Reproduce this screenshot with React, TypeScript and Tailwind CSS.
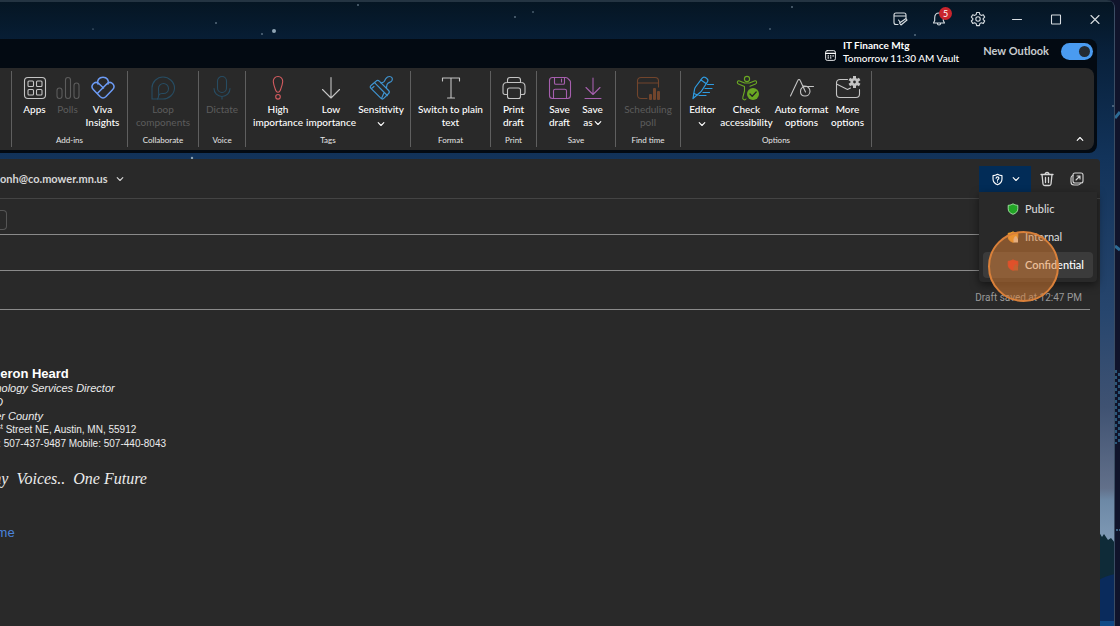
import React, { useState } from 'react';

interface IconProps {
  className?: string;
  children: React.ReactNode;
}

function Icon({ className = '', children }: IconProps) {
  return (
    <svg
      className={`h-7 w-7 shrink-0 ${className}`}
      viewBox="0 0 28 28"
      fill="none"
      stroke="currentColor"
      strokeWidth="1.1"
      strokeLinecap="round"
      strokeLinejoin="round"
      aria-hidden="true"
    >
      {children}
    </svg>
  );
}

function SmallIcon({ className = '', children }: IconProps) {
  return (
    <svg
      className={`h-4 w-4 shrink-0 ${className}`}
      viewBox="0 0 16 16"
      fill="none"
      stroke="currentColor"
      strokeWidth="1.1"
      strokeLinecap="round"
      strokeLinejoin="round"
      aria-hidden="true"
    >
      {children}
    </svg>
  );
}

function Chevron({ className = '' }: { className?: string }) {
  return (
    <svg className={`h-2 w-2 shrink-0 ${className}`} viewBox="0 0 8 8" fill="none" stroke="currentColor" strokeWidth="1.1" strokeLinecap="round" strokeLinejoin="round" aria-hidden="true">
      <path d="M1.2 2.7 4 5.5 6.8 2.7" />
    </svg>
  );
}

const icons = {
  apps: (
    <Icon className="text-[#c4c4c4]">
      <rect x="3.5" y="3.5" width="21" height="21" rx="3.5" />
      <rect x="7" y="7" width="5.5" height="5.5" rx="1" />
      <rect x="15.5" y="7" width="5.5" height="5.5" rx="1" />
      <rect x="7" y="15.5" width="5.5" height="5.5" rx="1" />
      <rect x="15.5" y="15.5" width="5.5" height="5.5" rx="1" />
    </Icon>
  ),
  polls: (
    <Icon className="text-[#5c5c5c]">
      <rect x="3" y="14" width="5" height="10.5" rx="2.5" />
      <rect x="11.5" y="3.5" width="5" height="21" rx="2.5" />
      <rect x="20" y="9" width="5" height="15.5" rx="2.5" />
    </Icon>
  ),
  viva: (
    <Icon className="text-[#6c9bf5]">
      <g strokeWidth="1.5">
        <path d="M9 10C7.700 6.500 10 3.200 14 3.200s6.300 3.300 5 6.800" />
        <path d="m14.500 14-4.200-4c-2-1.900-4.300-2-6-.300-1.800 1.900-1.600 4.200.200 6l6.500 6.800c2 2 4 2 6 0l6.500-6.800c1.800-1.800 2-4.100.2-6-1.700-1.700-4-1.600-6 .300l-8.700 8.700" />
      </g>
    </Icon>
  ),
  loop: (
    <Icon className="text-[#274c62]">
      <path d="M3 25V14C3 8 8 3 14 3s11.500 5 11.500 11S20 25 14 25H3Z" />
      <path d="M8.500 25c2-2 1-6.500 1-10.500C9.500 11.500 12 9.500 14.500 9.500s5 2 5 5-2.200 5-5 5c-2 0-3.500-.500-4.500 1.500" />
    </Icon>
  ),
  dictate: (
    <Icon className="text-[#274c62]">
      <rect x="9.500" y="2.500" width="9" height="16" rx="4.500" />
      <path d="M6 14.500c0 4.500 3.500 8 8 8s8-3.500 8-8M14 22.500V25" />
    </Icon>
  ),
  high: (
    <Icon className="text-[#d15b5f]">
      <path d="M14 2.500c-3 0-5 2.300-4.700 5.300.300 3.500 1.700 6.500 2.500 8.700.800 2.300 3.600 2.300 4.400 0 .800-2.200 2.200-5.200 2.500-8.700.300-3-1.700-5.300-4.700-5.300Z" />
      <circle cx="14" cy="22.800" r="2.300" />
    </Icon>
  ),
  low: (
    <Icon className="text-[#c4c4c4]">
      <path d="M14 3.500V24M5.500 15.500 14 24l8.500-8.500" />
    </Icon>
  ),
  sensitivity: (
    <Icon className="text-[#3f93cf]">
      <g strokeWidth="1.200">
        <path d="m4 11.500 5-4.300c1-1 2.300-1 3.300 0l9.300 9.300c1 1 1 2 0 3L17 24.200c-1 1-2.200 1-3.200 0L4 14.400c-1-1-1-2 0-2.900Z" />
        <path d="m7.500 8.700 12.800 12.800M4.500 14.500l2.500-2M14.500 24.500l2.500-5.700" />
        <path d="m14 9 2.200-.700c1.500-.500 1.600-2.300 2.600-3.600 1-1.400 2-2.200 3.700-2.200 2.300 0 3.500 2 2.500 4-.900 1.700-2.500 1.700-4 2.700-1.700 1.200-1 2.800-1.500 4.300" />
      </g>
    </Icon>
  ),
  text: (
    <Icon className="text-[#c4c4c4]">
      <path d="M5.500 7V4h17v3M14 4v20M10.500 24h7" />
    </Icon>
  ),
  print: (
    <Icon className="text-[#c4c4c4]">
      <path d="M7.500 8V6c0-1.500 1-2.500 2.500-2.500h8c1.500 0 2.500 1 2.500 2.500v2M7.500 20.500H5c-1.300 0-2-.800-2-2v-6C3 10 4.500 8.500 7 8.500h14c2.500 0 4 1.500 4 4v6c0 1.200-.700 2-2 2h-2.500" />
      <rect x="7.500" y="14" width="13" height="10.500" rx="2" />
    </Icon>
  ),
  save: (
    <Icon className="text-[#a65fae]">
      <path d="M3.500 6.500c0-2 1-3 3-3h13.300c.700 0 1.200.200 1.700.700l2.300 2.300c.500.500.700 1 .700 1.700v13.300c0 2-1 3-3 3h-15c-2 0-3-1-3-3v-15Z" />
      <path d="M8.500 3.500V9c0 .800.500 1.300 1.300 1.300h7.400c.800 0 1.300-.500 1.300-1.300V3.500M7.500 24.500V17c0-1 .600-1.700 1.700-1.700h9.600c1.100 0 1.700.700 1.700 1.700v7.500M15.500 5v3" />
    </Icon>
  ),
  saveAs: (
    <Icon className="text-[#a65fae]">
      <path d="M14 4v16M7 13.500l7 7 7-7M6 24.500h16" />
    </Icon>
  ),
  scheduling: (
    <Icon className="text-[#72452c]">
      <path d="M13 24.500H7c-2 0-3.500-1.500-3.500-3.500V7C3.500 5 5 3.500 7 3.500h14c2 0 3.500 1.500 3.500 3.500v6M3.500 9h21" />
      <g fill="currentColor" stroke="none">
        <rect x="15" y="20" width="3" height="6" rx="1" />
        <rect x="19" y="14" width="3" height="12" rx="1" />
        <rect x="23" y="17" width="3" height="9" rx="1" />
      </g>
    </Icon>
  ),
  editor: (
    <Icon className="text-[#2f9be0]">
      <g strokeWidth="1.200">
        <path d="m4 24.500 1.500-9c.200-1 .500-1.700 1-2.500L13 4.300c1-1.400 2.200-1.600 3.500-.700l1.300.900c1.300.9 1.500 2 .600 3.400L12.500 17c-.500.800-1 1.200-1.800 1.800L4 24.500Z" />
        <path d="m12 6 5 3.500M5 19.500l3.500 1.500M18.500 10.500h6M16 14.500h7M14 18.500h6.500M10 21.500h7" />
      </g>
    </Icon>
  ),
  accessibility: (
    <Icon className="text-[#6aa823]">
      <circle cx="14" cy="5" r="2.600" />
      <path d="M13 25c-.500.700-1.500 1-2.300.600-1-.400-1.200-1.200-.900-2.200L11.500 17v-4.500l-6-2.500c-1-.400-1.400-1.200-1-2.200.300-.900 1.200-1.200 2.100-.900l5 2.100h4.800l5-2.100c.900-.300 1.800 0 2.100.900.400 1 0 1.800-1 2.200l-5.500 2.300" />
      <circle cx="20" cy="20" r="6" fill="currentColor" stroke="none" />
      <path d="m17 20 2.200 2.200 4-4.200" stroke="#242424" strokeWidth="1.300" />
    </Icon>
  ),
  autoFormat: (
    <Icon className="text-[#c4c4c4]">
      <path d="m2.500 22 7.300-15.500c.600-1.400 1.800-1.400 2.400 0l5.300 11.500" />
      <path d="M25.500 12.500h-7c-4 0-6 2.200-6 5s2 4.500 4.500 4.500 5-1.800 5-4.800c0-3.200-2.500-5.700-7-5.200" />
    </Icon>
  ),
  more: (
    <Icon className="text-[#c4c4c4]">
      <path d="M13.500 5.500H6C4 5.500 2.500 7 2.500 9v11c0 2 1.500 3.500 3.500 3.500h16c2 0 3.500-1.500 3.500-3.500v-4.500M2.500 10l11 5.500 3-1.500" />
      <g strokeWidth="3" strokeLinecap="butt">
        <path d="M20.500 2v12M15.300 5l10.400 6M15.300 11l10.400-6" />
      </g>
      <circle cx="20.500" cy="8" r="4" fill="currentColor" stroke="none" />
      <circle cx="20.500" cy="8" r="1.400" fill="#292929" stroke="none" />
    </Icon>
  ),
};

interface Command {
  icon: React.ReactNode;
  label: string[];
  width: string;
  disabled?: boolean;
  menu?: 'below' | 'inline';
}

interface Group {
  name: string;
  width: string;
  commands: Command[];
}

const groups: Group[] = [
  {
    name: 'Add-ins',
    width: 'w-[116px]',
    commands: [
      { icon: icons.apps, label: ['Apps'], width: 'w-8' },
      { icon: icons.polls, label: ['Polls'], width: 'w-8', disabled: true },
      { icon: icons.viva, label: ['Viva', 'Insights'], width: 'w-9' },
    ],
  },
  {
    name: 'Collaborate',
    width: 'w-[71px]',
    commands: [{ icon: icons.loop, label: ['Loop', 'components'], width: 'w-16', disabled: true }],
  },
  {
    name: 'Voice',
    width: 'w-[47px]',
    commands: [{ icon: icons.dictate, label: ['Dictate'], width: 'w-10', disabled: true }],
  },
  {
    name: 'Tags',
    width: 'w-[165px]',
    commands: [
      { icon: icons.high, label: ['High', 'importance'], width: 'w-[52px]' },
      { icon: icons.low, label: ['Low', 'importance'], width: 'w-[52px]' },
      { icon: icons.sensitivity, label: ['Sensitivity'], width: 'w-[46px]', menu: 'below' },
    ],
  },
  {
    name: 'Format',
    width: 'w-[80px]',
    commands: [{ icon: icons.text, label: ['Switch to plain', 'text'], width: 'w-[72px]' }],
  },
  {
    name: 'Print',
    width: 'w-[46px]',
    commands: [{ icon: icons.print, label: ['Print', 'draft'], width: 'w-10' }],
  },
  {
    name: 'Save',
    width: 'w-[79px]',
    commands: [
      { icon: icons.save, label: ['Save', 'draft'], width: 'w-8' },
      { icon: icons.saveAs, label: ['Save', 'as'], width: 'w-8', menu: 'inline' },
    ],
  },
  {
    name: 'Find time',
    width: 'w-[65px]',
    commands: [{ icon: icons.scheduling, label: ['Scheduling', 'poll'], width: 'w-14', disabled: true }],
  },
  {
    name: 'Options',
    width: 'w-[191px]',
    commands: [
      { icon: icons.editor, label: ['Editor'], width: 'w-8', menu: 'below' },
      { icon: icons.accessibility, label: ['Check', 'accessibility'], width: 'w-[54px]' },
      { icon: icons.autoFormat, label: ['Auto format', 'options'], width: 'w-[54px]' },
      { icon: icons.more, label: ['More', 'options'], width: 'w-9' },
    ],
  },
];

function RibbonButton({ icon, label, width, disabled, menu }: Command) {
  return (
    <button
      type="button"
      disabled={disabled}
      className={`flex shrink-0 flex-col items-center whitespace-nowrap text-[10px] leading-[13px] ${width} ${
        disabled ? 'text-[#5c5c5c]' : 'font-medium text-white'
      }`}
    >
      {icon}
      <span className="mt-px flex flex-col items-center">
        {label.map((line, i) => (
          <span key={line} className="flex items-center gap-px">
            {line}
            {menu === 'inline' && i === label.length - 1 && <Chevron />}
          </span>
        ))}
        {menu === 'below' && <Chevron className="mt-1" />}
      </span>
    </button>
  );
}

function RibbonGroup({ name, width, commands }: Group) {
  return (
    <section className={`flex shrink-0 flex-col items-center justify-between border-r border-[#5f5f5f] ${width}`}>
      <div className="flex justify-center gap-px pt-[3px]">
        {commands.map((command) => (
          <RibbonButton key={command.label.join(' ')} {...command} />
        ))}
      </div>
      <h2 className="pb-0.5 text-[8px] leading-[10px] text-[#e6e6e6]">{name}</h2>
    </section>
  );
}

function TitleBar() {
  return (
    <header className="flex h-[39px] items-center justify-end gap-[7px] border-t-2 border-[#243442] pr-[3px] pb-1 text-[#d8dde1]">
      <button type="button" aria-label="My day" className="flex w-8 justify-center">
        <SmallIcon>
          <path d="M6 13.500H4c-1.200 0-2-.800-2-2V4c0-1.200.800-2 2-2h8c1.200 0 2 .800 2 2v3M2 5h12" />
          <path d="m7.500 12 1.500 2 6-5-1-1.500-6.500 4.500ZM6.500 9l1.500 2" />
        </SmallIcon>
      </button>
      <button type="button" aria-label="Notifications" className="relative flex w-8 justify-center">
        <SmallIcon>
          <path d="M8 2C5 2 3.700 4.500 3.700 7v2.500L2.500 12h11l-1.200-2.500V7C12.300 4.500 11 2 8 2ZM6.300 12.300c.200 2.300 3.200 2.300 3.400 0" />
        </SmallIcon>
        <span className="absolute -top-1 right-[3px] flex h-[13px] w-[13px] items-center justify-center rounded-full bg-[#c9252d] text-[9px] leading-none text-white">
          5
        </span>
      </button>
      <button type="button" aria-label="Settings" className="flex w-8 justify-center">
        <SmallIcon>
          <path d="M6.600 1.500h2.800l.400 2 1.500.900 2-.700 1.400 2.400L13.200 7.500v1.200l1.500 1.300-1.400 2.400-2-.700-1.500.900-.400 2H6.600l-.400-2-1.500-.900-2 .700L1.300 10l1.500-1.300V7.500L1.300 6.100l1.400-2.400 2 .700 1.500-.900.400-2Z" />
          <circle cx="8" cy="8" r="2.200" />
        </SmallIcon>
      </button>
      <button type="button" aria-label="Minimize" className="flex w-8 justify-center">
        <SmallIcon>
          <path d="M3.500 8.500h9" />
        </SmallIcon>
      </button>
      <button type="button" aria-label="Maximize" className="flex w-8 justify-center">
        <SmallIcon>
          <rect x="3.500" y="4" width="9" height="9" rx=".500" />
        </SmallIcon>
      </button>
      <button type="button" aria-label="Close" className="flex w-8 justify-center">
        <SmallIcon>
          <path d="m4 4.500 8 8M12 4.500l-8 8" />
        </SmallIcon>
      </button>
    </header>
  );
}

function ReminderBar() {
  return (
    <div className="flex h-[29px] items-center justify-end pb-1">
      <SmallIcon className="mt-2 h-[13px] w-[13px] text-white">
        <rect x="2" y="2" width="12" height="12" rx="2" />
        <path d="M2 5.500h12M5 8.500h.500M8 8.500h.500M11 8.500h.500M5 11h.500M8 11h.500" strokeWidth="1.500" />
      </SmallIcon>
      <p className="ml-1.5 text-[10px] leading-[13px] font-medium text-white">
        <span className="font-bold">IT Finance Mtg</span>
        <br />
        Tomorrow 11:30 AM Vault
      </p>
      <label htmlFor="new-outlook" className="ml-6 text-[11px] font-bold text-[#c8cccf]">
        New Outlook
      </label>
      <span className="relative mr-1 ml-3 flex">
        <input
          id="new-outlook"
          type="checkbox"
          role="switch"
          defaultChecked
          className="h-[17px] w-8 appearance-none rounded-full bg-[#4a9bf0]"
        />
        <span className="pointer-events-none absolute top-[3px] right-[3px] h-[11px] w-[11px] rounded-full bg-[#242b33]" />
      </span>
    </div>
  );
}

const levels = [
  { name: 'Public', fill: '#22a526', stroke: '#a9e8a8', badge: '' },
  { name: 'Internal', fill: '#f2a22c', stroke: '#f2a22c', badge: '#ead9c4' },
  { name: 'Confidential', fill: '#e0201f', stroke: '#e0201f', badge: '#a8402a' },
];

function SensitivityMenu({ active }: { active: string }) {
  return (
    <ul role="menu" className="absolute top-full left-0 z-10 w-[118px] space-y-0.5 rounded-b bg-[#292929] px-1 pt-1 pb-1 shadow-[0_3px_8px_rgba(0,0,0,0.5)]">
      {levels.map((level) => (
        <li key={level.name} role="none">
          <button
            type="button"
            role="menuitem"
            className={`flex h-[26px] w-full items-center gap-1.5 rounded pl-6 text-[11px] font-medium ${
              level.name === active ? 'bg-[#3b3b3b] text-white' : 'text-[#d6d6d6]'
            }`}
          >
            <svg className="h-3 w-3 shrink-0" viewBox="0 0 12 12" aria-hidden="true">
              <path d="M6 .800c1.500 1 3 1.400 4.800 1.500v3.500c0 2.800-1.800 4.500-4.800 5.500-3-1-4.800-2.700-4.800-5.500V2.300C3 2.200 4.500 1.800 6 .800Z" fill={level.fill} stroke={level.stroke} strokeWidth=".900" />
              {level.badge && <path d="M6.500 7.500h.700V6.800c0-2 3-2 3 0v.700h.800v4H6.500v-4Z" fill={level.badge} />}
            </svg>
            {level.name}
          </button>
        </li>
      ))}
    </ul>
  );
}

function MessageHeader() {
  const [open, setOpen] = useState(true);

  return (
    <div className="flex h-10 items-center justify-between border-b border-[#444] pt-px text-[#d6d6d6]">
      <button type="button" className="flex items-center gap-2 text-[11px] font-bold">
        onh@co.mower.mn.us
        <Chevron />
      </button>
      <div className="flex items-center">
        <div className="relative">
          <button
            type="button"
            aria-label="Sensitivity"
            aria-expanded={open}
            onClick={() => setOpen(!open)}
            className="flex h-[26px] w-[52px] items-center justify-center gap-2 bg-[#022c57] text-white"
          >
            <SmallIcon className="h-[13px] w-[13px]">
              <path d="M8 1.500c2 1.200 3.800 1.700 5.500 1.800v4.200c0 3.500-2 5.700-5.500 7-3.500-1.300-5.500-3.500-5.500-7V3.300C4.200 3.200 6 2.700 8 1.500Z" strokeWidth="1.400" />
              <path d="M6.300 6.500c0-2.300 3.500-2.200 3.400 0C9.700 7.700 8 7.700 8 9M8 11v.200" strokeWidth="1.400" />
            </SmallIcon>
            <Chevron />
          </button>
          {open && <SensitivityMenu active="Confidential" />}
        </div>
        <button type="button" aria-label="Discard" className="ml-2 flex w-4">
          <SmallIcon>
            <path d="M2 3.500h12M6 3.500c0-2.700 4-2.700 4 0M3 3.500l1 9.500c.100 1 .700 1.500 1.700 1.500h4.600c1 0 1.600-.500 1.700-1.500l1-9.500M6.500 6.500v5M9.500 6.500v5" strokeWidth="1.300" />
          </SmallIcon>
        </button>
        <button type="button" aria-label="Open in new window" className="mr-[15px] ml-3.5 flex w-4">
          <SmallIcon>
            <rect x="4" y="2" width="10" height="10" rx="2" />
            <path d="M4 4.500c-1.500.200-2 1-2 2.500v4c0 2 1 3 3 3h4c1.500 0 2.300-.500 2.500-2M7 9l4-4M8 5h3v3" />
          </SmallIcon>
        </button>
      </div>
    </div>
  );
}

function Signature() {
  return (
    <address className="-ml-7 font-['Liberation_Sans',sans-serif] text-[11px] leading-[14px] whitespace-nowrap text-[#ececec] italic">
      <p className="text-[13px] leading-[15px] font-bold text-white not-italic">Cameron Heard</p>
      <p>Technology Services Director</p>
      <p>DCTO</p>
      <p>Mower County</p>
      <p className="text-[10px] not-italic">
        201 1<sup>st</sup> Street NE, Austin, MN, 55912
      </p>
      <p className="text-[10px] not-italic">Direct: 507-437-9487 Mobile: 507-440-8043</p>
      <p className="mt-4 font-['Z003','URW_Chancery_L','Liberation_Serif',cursive] text-base">Many&nbsp; Voices..&nbsp; One Future</p>
    </address>
  );
}

function Wallpaper() {
  return (
    <svg className="absolute inset-0 h-full w-full" preserveAspectRatio="none" viewBox="0 0 1114 626" aria-hidden="true">
      <defs>
        <linearGradient id="sky" x1="0" y1="0" x2="0" y2="1">
          <stop offset="0" stopColor="#051522" />
          <stop offset=".08" stopColor="#08203a" />
          <stop offset=".25" stopColor="#12335a" />
          <stop offset=".5" stopColor="#27466e" />
          <stop offset=".65" stopColor="#3f5272" />
          <stop offset=".78" stopColor="#62708a" />
          <stop offset=".8" stopColor="#6d89a6" />
          <stop offset=".86" stopColor="#7e98b4" />
        </linearGradient>
      </defs>
      <rect width="1114" height="626" fill="url(#sky)" />
      <path d="M1099 532l3 5 2-3 4 6 3-2 4 5v83h-16z" fill="#0f2b38" />
      <path d="M1099 580c5-3 10-5 16-6v52h-16z" fill="#0a2b5c" />
      <path d="M1099 621h16v5h-16z" fill="#0f4a86" />
      <g fill="#8fa5b5">
        <circle cx="274" cy="31" r="2" />
        <circle cx="216" cy="23" r=".8" />
        <circle cx="262" cy="34" r=".8" />
        <circle cx="93" cy="29" r=".6" />
        <circle cx="358" cy="5" r=".8" />
        <circle cx="515" cy="17" r=".8" />
        <circle cx="533" cy="12" r=".7" />
        <circle cx="792" cy="7" r=".8" />
        <circle cx="770" cy="29" r=".7" />
        <circle cx="915" cy="35" r=".8" />
        <circle cx="192" cy="158" r="1.200" />
        <circle cx="1113" cy="106" r=".8" />
      </g>
    </svg>
  );
}

export default function App() {
  return (
    <div className="flex min-h-screen overflow-hidden bg-[#10142b] font-['Lato','Noto_Sans',sans-serif]">
      <div className="relative flex min-w-0 flex-1 flex-col overflow-hidden rounded-tr-lg border-r border-[#3b4d63]">
        <Wallpaper />
        <div className="relative flex flex-1 flex-col">
          <TitleBar />

          {/* Ribbon */}
          <div className="mr-[17px] rounded-r-lg bg-[#030a12] pb-[3px]">
            <ReminderBar />
            <div className="mr-[3px] flex h-[82px] overflow-hidden rounded-r-lg bg-[#292929] py-[3px]">
              <div className="w-3 shrink-0 border-r border-[#5f5f5f]" />
              {groups.map((group) => (
                <RibbonGroup key={group.name} {...group} />
              ))}
              <button type="button" aria-label="Collapse ribbon" className="mr-2.5 mb-1 ml-auto self-end text-white">
                <Chevron className="rotate-180" />
              </button>
            </div>
          </div>

          {/* Message */}
          <main className="mt-1.5 mr-3.5 flex-1 rounded-tr bg-[#292929]">
            <MessageHeader />
            <div className="mr-2.5">
              <div className="flex h-9 items-center border-b border-[#8a8a8a] pt-1.5">
                <button type="button" aria-label="To" className="h-5 w-[7px] rounded-r border border-l-0 border-[#555]" />
              </div>
              <input aria-label="Cc" className="block h-9 w-full border-b border-[#8a8a8a] outline-none" />
              <div className="flex h-[39px] items-end border-b border-[#8a8a8a] pb-1">
                <input aria-label="Subject" className="h-6 min-w-0 flex-1 outline-none" />
                <span className="mr-2 font-['Roboto','Lato',sans-serif] text-[10px] leading-[14px] text-[#9a9a9a]">Draft saved at 12:47 PM</span>
              </div>
            </div>
            <div className="overflow-hidden pt-14">
              <Signature />
              <a href="#home" className="mt-8 -ml-5 block font-['Liberation_Sans',sans-serif] text-[13px] leading-5 text-[#4a83dc]">
                Home
              </a>
            </div>
          </main>
        </div>

        {/* Click highlight */}
        <span className="pointer-events-none absolute top-[231px] right-[55px] z-20 h-[71px] w-[71px] rounded-full border-2 border-[#d9803a] bg-[#e08236]/50" />
      </div>

      {/* Desktop edge */}
      <svg className="w-[5px] shrink-0 self-start" height="626" viewBox="0 0 5 626" aria-hidden="true">
        <path d="M0 118l5-6M0 246l5 4" stroke="#2c6a94" strokeWidth="3" />
        <path d="M1 370v74M4 373v70" stroke="#2b587b" strokeWidth="2" strokeDasharray="3 3" />
        <path d="M1 530h4" stroke="#3f6282" strokeWidth="2" strokeDasharray="2 1" />
      </svg>
    </div>
  );
}
